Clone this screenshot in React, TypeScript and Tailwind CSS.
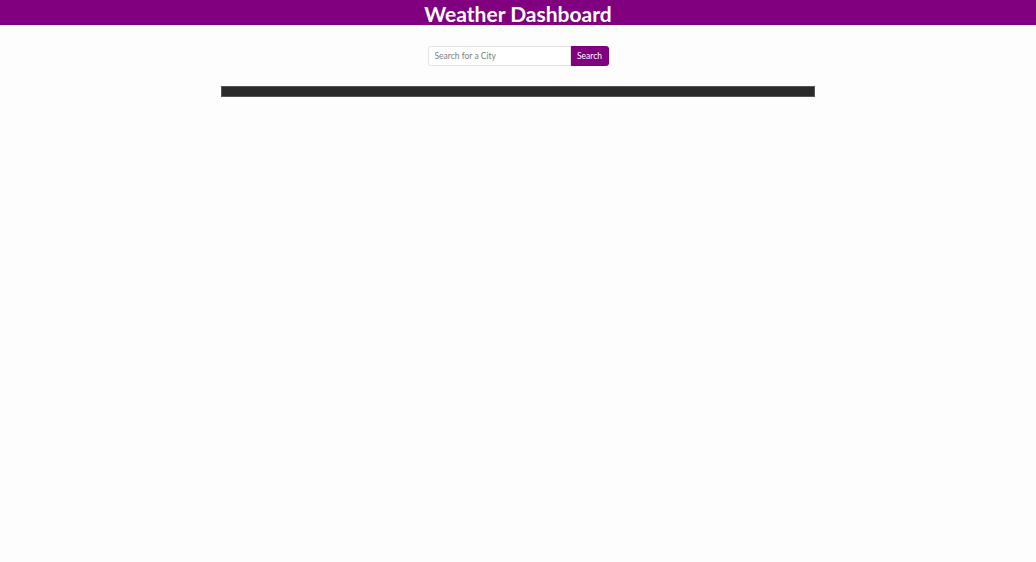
export default function App() {
  return (
    <div className="min-h-screen bg-[#fdfdfd] font-['Lato',sans-serif]">
      {/* Header */}
      <header className="flex h-[25px] justify-center bg-[#800080]">
        <h1 className="pt-[2px] text-[21px] font-bold leading-[23px] text-white">Weather Dashboard</h1>
      </header>

      {/* Search */}
      <div className="mt-[21px] flex justify-center">
        <input
          type="text"
          placeholder="Search for a City"
          className="h-5 w-[143px] rounded-l-[3px] border border-[#e3e3e3] bg-white px-[6px] text-[8.5px] text-[#555] placeholder:text-[#7d7d7d] outline-none"
        />
        <button className="h-5 w-[38px] rounded-r-[3px] bg-[#800080] text-[8.5px] text-white">
          Search
        </button>
      </div>

      {/* Results bar */}
      <div className="mx-auto mt-5 h-[11px] w-[594px] border border-[#555] bg-[#2b2b2b]" />
    </div>
  );
}
